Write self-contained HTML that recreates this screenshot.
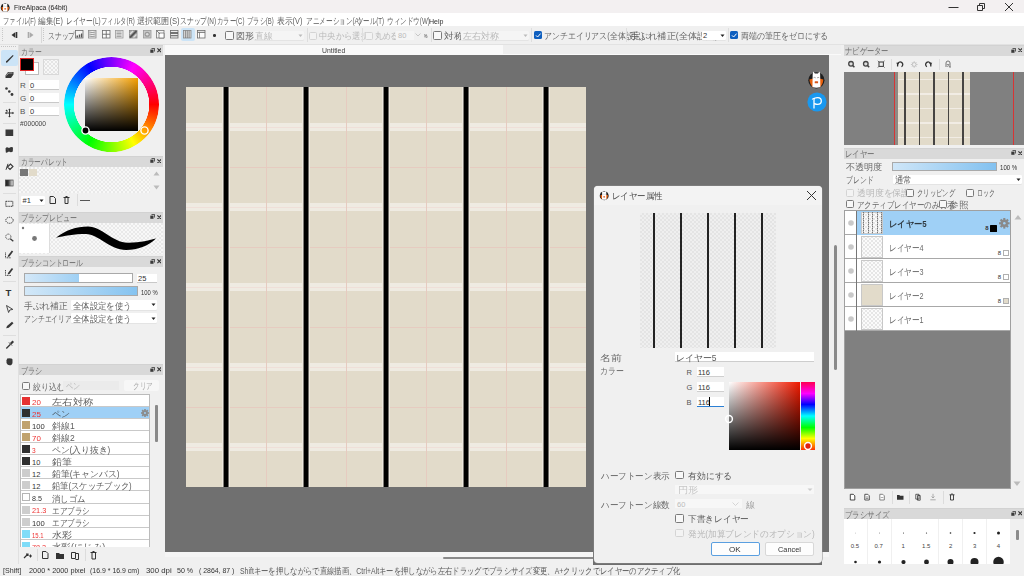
<!DOCTYPE html><html><head><meta charset="utf-8"><style>
html,body{margin:0;padding:0}
body{width:1024px;height:576px;overflow:hidden;position:relative;background:#f0f0f0;font-family:"Liberation Sans",sans-serif}
body div{position:absolute}
.t{white-space:pre}
</style></head><body>
<div style="left:0px;top:0px;width:1024px;height:13px;background:#f3f0f1"></div>
<div style="left:0px;top:13px;width:1024px;height:13px;background:#ffffff"></div>
<div style="left:0px;top:26px;width:1024px;height:18px;background:#f0f0f0"></div>
<div style="left:0px;top:44px;width:1024px;height:1px;background:#e2e2e2"></div>
<div style="left:0px;top:45px;width:1024px;height:531px;background:#f0f0f0"></div>
<div style="left:165px;top:45px;width:338px;height:10px;background:#f9f9f9"></div>
<div style="left:503px;top:45px;width:338px;height:9px;background:#eeeeee"></div>
<div style="left:503px;top:54px;width:338px;height:1px;background:#fafafa"></div>
<div class="t" style="left:322px;top:44.80px;line-height:12px;font-size:7.5px;color:#444;;transform:scaleX(0.913);transform-origin:0 50%">Untitled</div>
<div style="left:165px;top:55px;width:664px;height:497px;background:#707070"></div>
<div style="left:165px;top:552px;width:664px;height:5px;background:#f5f5f5"></div>
<div style="left:443px;top:557px;width:151px;height:2px;background:#8a8a8a;border-radius:1px"></div>
<div style="left:186px;top:87px;width:400px;height:400px;background:#e2dbca"></div>
<div style="left:186px;top:123px;width:400px;height:8px;background:#efebe2"></div>
<div style="left:186px;top:127px;width:400px;height:1px;background:#efdfd8"></div>
<div style="left:186px;top:203px;width:400px;height:8px;background:#efebe2"></div>
<div style="left:186px;top:207px;width:400px;height:1px;background:#efdfd8"></div>
<div style="left:186px;top:283px;width:400px;height:8px;background:#efebe2"></div>
<div style="left:186px;top:287px;width:400px;height:1px;background:#efdfd8"></div>
<div style="left:186px;top:363px;width:400px;height:8px;background:#efebe2"></div>
<div style="left:186px;top:367px;width:400px;height:1px;background:#efdfd8"></div>
<div style="left:186px;top:443px;width:400px;height:8px;background:#efebe2"></div>
<div style="left:186px;top:447px;width:400px;height:1px;background:#efdfd8"></div>
<div style="left:186px;top:167px;width:400px;height:1px;background:#e6cbc0"></div>
<div style="left:186px;top:247px;width:400px;height:1px;background:#e6cbc0"></div>
<div style="left:186px;top:327px;width:400px;height:1px;background:#e6cbc0"></div>
<div style="left:186px;top:407px;width:400px;height:1px;background:#e6cbc0"></div>
<div style="left:266px;top:87px;width:1px;height:400px;background:#e6cbc0"></div>
<div style="left:346px;top:87px;width:1px;height:400px;background:#e6cbc0"></div>
<div style="left:426px;top:87px;width:1px;height:400px;background:#e6cbc0"></div>
<div style="left:506px;top:87px;width:1px;height:400px;background:#e6cbc0"></div>
<div style="left:222px;top:87px;width:1px;height:400px;background:#eee8de"></div>
<div style="left:223px;top:87px;width:1px;height:400px;background:#807d77"></div>
<div style="left:224px;top:87px;width:4px;height:400px;background:#000"></div>
<div style="left:228px;top:87px;width:1px;height:400px;background:#6e6b66"></div>
<div style="left:229px;top:87px;width:1px;height:400px;background:#eee8de"></div>
<div style="left:302px;top:87px;width:1px;height:400px;background:#eee8de"></div>
<div style="left:303px;top:87px;width:1px;height:400px;background:#807d77"></div>
<div style="left:304px;top:87px;width:4px;height:400px;background:#000"></div>
<div style="left:308px;top:87px;width:1px;height:400px;background:#6e6b66"></div>
<div style="left:309px;top:87px;width:1px;height:400px;background:#eee8de"></div>
<div style="left:382px;top:87px;width:1px;height:400px;background:#eee8de"></div>
<div style="left:383px;top:87px;width:1px;height:400px;background:#807d77"></div>
<div style="left:384px;top:87px;width:4px;height:400px;background:#000"></div>
<div style="left:388px;top:87px;width:1px;height:400px;background:#6e6b66"></div>
<div style="left:389px;top:87px;width:1px;height:400px;background:#eee8de"></div>
<div style="left:462px;top:87px;width:1px;height:400px;background:#eee8de"></div>
<div style="left:463px;top:87px;width:1px;height:400px;background:#807d77"></div>
<div style="left:464px;top:87px;width:4px;height:400px;background:#000"></div>
<div style="left:468px;top:87px;width:1px;height:400px;background:#6e6b66"></div>
<div style="left:469px;top:87px;width:1px;height:400px;background:#eee8de"></div>
<div style="left:542px;top:87px;width:1px;height:400px;background:#eee8de"></div>
<div style="left:543px;top:87px;width:1px;height:400px;background:#807d77"></div>
<div style="left:544px;top:87px;width:4px;height:400px;background:#000"></div>
<div style="left:548px;top:87px;width:1px;height:400px;background:#6e6b66"></div>
<div style="left:549px;top:87px;width:1px;height:400px;background:#eee8de"></div>
<div style="left:834px;top:245px;width:3px;height:125px;background:#8a8a8a;border-radius:2px"></div>
<div style="left:18px;top:45px;width:1px;height:519px;background:#e0e0e0"></div>
<div style="left:1px;top:46px;width:16px;height:1px;background:repeating-linear-gradient(90deg,#c4c4c4 0 1px,transparent 1px 2px)"></div>
<div style="left:1px;top:49.8px;width:17px;height:16.7px;background:#cce4f7;border-radius:2px"></div>
<svg style="position:absolute;left:0;top:0" width="20" height="380" viewBox="0 0 20 380">
<path d="M6 62.5 Q5.5 61 7 60.5 L12.8 55 L13.6 55.8 L8.2 61.5 Q7.5 63 6 62.5Z" fill="#383838"/>
<path d="M5.5 75.5 L8 72 L13.5 72 L11 75.5Z M5.5 75.5 L11 75.5 L11 78 L5.5 78Z M11 75.5 L13.5 72 L13.5 74.5 L11 78Z" fill="#383838"/><path d="M6.5 75.5 L8.5 73 L12.5 73" fill="none" stroke="#f0f0f0" stroke-width="0.6"/>
<circle cx="6.5" cy="88.5" r="1.3" fill="#383838"/><circle cx="9.3" cy="91.5" r="1.3" fill="#383838"/><circle cx="12" cy="94.5" r="1.4" fill="#383838"/>
<path d="M9.5 109 V117 M5.5 113 H13.5" stroke="#383838" stroke-width="1"/><path d="M9.5 108.5 l-1.3 1.6 h2.6z M9.5 117.5 l-1.3 -1.6 h2.6z M5 113 l1.6 -1.3 v2.6z M14 113 l-1.6 -1.3 v2.6z" fill="#383838"/><path d="M6 110 l1.5 1.5" stroke="#383838" stroke-width="1.2"/>
<rect x="5.5" y="129.5" width="7.7" height="6.5" fill="#3a3a3a"/>
<path d="M5.5 148.5 Q6.5 146.5 9 148 Q11.5 146.5 13 147.5 L12.8 151.5 Q11 153 9 151.5 Q7 153 5.8 152.5Z" fill="#383838"/>
<path d="M7.5 167 L10.5 164 L13 166.5 L10 169.5Z" fill="none" stroke="#383838" stroke-width="1.1"/><path d="M6 169.8 L8 163.8" stroke="#383838" stroke-width="1"/>
<defs><linearGradient id="tg" x1="0" x2="1"><stop offset="0" stop-color="#222"/><stop offset="0.35" stop-color="#333"/><stop offset="1" stop-color="#eee"/></linearGradient></defs><rect x="5.5" y="180" width="7.6" height="6" fill="url(#tg)" stroke="#444" stroke-width="0.7"/>
<rect x="5.8" y="201.3" width="7" height="5" fill="none" stroke="#383838" stroke-width="1" stroke-dasharray="1.2 0.6"/>
<ellipse cx="9.5" cy="220.3" rx="3.7" ry="3" fill="none" stroke="#383838" stroke-width="1" stroke-dasharray="1.3 0.8"/>
<circle cx="8.3" cy="236.7" r="2.6" fill="none" stroke="#383838" stroke-width="0.9" stroke-dasharray="1 0.7"/><path d="M10.3 238.7 L13.3 241.3" stroke="#383838" stroke-width="1.3"/>
<path d="M5.5 252.5 v5.3 h5.5" fill="none" stroke="#383838" stroke-width="0.9" stroke-dasharray="1.1 0.6"/><path d="M8 255.5 L11.8 250.5 L13.2 251.6 L9.5 256.5 L7.6 257Z" fill="#383838"/>
<path d="M5.5 270 v5.5 h5.5" fill="none" stroke="#383838" stroke-width="0.9" stroke-dasharray="1.1 0.6"/><path d="M8 273 L11.8 268 L13.2 269.1 L9.5 274 L7.6 274.5Z" fill="#383838"/>
<path d="M6.5 305.5 L12.8 309.4 L9.8 310 L8.6 312.5 Z" fill="none" stroke="#383838" stroke-width="0.9"/>
<path d="M6.2 328.3 L7 326 L12 321.8 L13.5 323.3 L8.8 327.8Z" fill="#383838"/>
<path d="M6.3 348.5 L10.5 344.3" stroke="#383838" stroke-width="1.3"/><path d="M10 343 L12.5 340.6 L14 342.1 L11.6 344.6Z" fill="#383838"/><path d="M9 342.5 L12 345.5" stroke="#383838" stroke-width="1"/>
<path d="M6.5 361 Q6 359.5 7 359.5 V358.8 Q8 358 8.8 358.6 Q9.8 357.8 10.8 358.6 Q12 358.4 12.5 359.6 V362.5 Q12.3 365.5 9.5 365.3 Q7.5 365.3 6.5 363Z" fill="#383838"/>
</svg>
<div style="left:3px;top:102.3px;width:13px;height:1px;background:#dedede"></div>
<div style="left:3px;top:122.8px;width:13px;height:1px;background:#dedede"></div>
<div style="left:3px;top:193px;width:13px;height:1px;background:#dedede"></div>
<div style="left:3px;top:281px;width:13px;height:1px;background:#dedede"></div>
<div style="left:3px;top:334.8px;width:13px;height:1px;background:#dedede"></div>
<div class="t" style="left:5.6px;top:286.50px;line-height:12px;font-size:9.5px;color:#333;font-weight:bold;font-family:"Liberation Serif",serif">T</div>
<div style="left:19px;top:45px;width:144px;height:11px;background:#d9d9d9;border-top:1px solid #d2d2d2;box-sizing:border-box"></div>
<div class="t" style="left:20.5px;top:45.60px;line-height:12px;font-size:8.5px;color:#555;opacity:0.8;;transform:scaleX(0.762);transform-origin:0 50%">カラー</div>
<svg style="position:absolute;left:149.5px;top:47.8px;" width="5" height="5" viewBox="0 0 5 5"><path d="M0.3 1.6h3.2v3.2h-3.2z" fill="#3a3a3a"/><path d="M1.5 0.4h3.1v3.1" fill="none" stroke="#3a3a3a" stroke-width="0.9"/></svg>
<svg style="position:absolute;left:156.7px;top:48px;" width="4.5" height="4.5" viewBox="0 0 4.5 4.5"><path d="M0.4 0.4L4.1 4.1M4.1 0.4L0.4 4.1" stroke="#333" stroke-width="1.1"/></svg>
<div style="left:20px;top:58px;width:14px;height:13px;background:#fff;border:1px solid #bbb;box-sizing:border-box;left:25px;top:62px"></div>
<div style="left:20px;top:58px;width:14px;height:13px;background:#000;border:1px solid #e02020;box-sizing:border-box"></div>
<div style="left:43px;top:59px;width:16px;height:16px;background-color:#f7f7f7;background-image:linear-gradient(45deg,#e4e4e4 25%,transparent 25%,transparent 75%,#e4e4e4 75%),linear-gradient(45deg,#e4e4e4 25%,transparent 25%,transparent 75%,#e4e4e4 75%);background-size:4px 4px;background-position:0 0,2px 2px"></div>
<div style="left:43px;top:59px;width:16px;height:16px;border:1px solid #d8d8d8;box-sizing:border-box"></div>
<div class="t" style="left:20px;top:79.50px;line-height:12px;font-size:8px;color:#555;">R</div>
<div style="left:29px;top:80.0px;width:30px;height:9.5px;background:#fff;border-bottom:1px solid #c8c8c8;box-sizing:border-box"></div>
<div class="t" style="left:30px;top:79.75px;line-height:12px;font-size:7.5px;color:#333;">0</div>
<div class="t" style="left:20px;top:92.80px;line-height:12px;font-size:8px;color:#555;">G</div>
<div style="left:29px;top:93.3px;width:30px;height:9.5px;background:#fff;border-bottom:1px solid #c8c8c8;box-sizing:border-box"></div>
<div class="t" style="left:30px;top:93.05px;line-height:12px;font-size:7.5px;color:#333;">0</div>
<div class="t" style="left:20px;top:106.00px;line-height:12px;font-size:8px;color:#555;">B</div>
<div style="left:29px;top:106.5px;width:30px;height:9.5px;background:#fff;border-bottom:1px solid #c8c8c8;box-sizing:border-box"></div>
<div class="t" style="left:30px;top:106.25px;line-height:12px;font-size:7.5px;color:#333;">0</div>
<div class="t" style="left:20px;top:117.70px;line-height:12px;font-size:7.5px;color:#444;;transform:scaleX(0.893);transform-origin:0 50%">#000000</div>
<div style="left:64px;top:56.5px;width:95px;height:95px;border-radius:50%;background:conic-gradient(from 90deg,#f00,#ff0,#0f0,#0ff,#00f,#f0f,#f00);-webkit-mask:radial-gradient(circle,transparent 37.5px,#000 38px);mask:radial-gradient(circle,transparent 37.5px,#000 38px)"></div>
<div style="left:85px;top:77.5px;width:53px;height:53px;background:linear-gradient(to bottom,rgba(0,0,0,0),#000),linear-gradient(to right,#fff,#f5a000)"></div>
<svg style="position:absolute;left:80px;top:125px;" width="11" height="11" viewBox="0 0 11 11"><circle cx="5.5" cy="5.5" r="3.6" fill="#000" stroke="#fff" stroke-width="1.4"/></svg>
<svg style="position:absolute;left:139px;top:125px;" width="11" height="11" viewBox="0 0 11 11"><circle cx="5.5" cy="5.5" r="3.6" fill="none" stroke="#fff" stroke-width="1.4"/></svg>
<div style="left:19px;top:155.5px;width:144px;height:11px;background:#d9d9d9;border-top:1px solid #d2d2d2;box-sizing:border-box"></div>
<div class="t" style="left:20.5px;top:156.10px;line-height:12px;font-size:8.5px;color:#555;opacity:0.8;;transform:scaleX(0.745);transform-origin:0 50%">カラーパレット</div>
<svg style="position:absolute;left:149.5px;top:158.3px;" width="5" height="5" viewBox="0 0 5 5"><path d="M0.3 1.6h3.2v3.2h-3.2z" fill="#3a3a3a"/><path d="M1.5 0.4h3.1v3.1" fill="none" stroke="#3a3a3a" stroke-width="0.9"/></svg>
<svg style="position:absolute;left:156.7px;top:158.5px;" width="4.5" height="4.5" viewBox="0 0 4.5 4.5"><path d="M0.4 0.4L4.1 4.1M4.1 0.4L0.4 4.1" stroke="#333" stroke-width="1.1"/></svg>
<div style="left:19px;top:166.5px;width:131px;height:26px;background-color:#f8f8f8;background-image:linear-gradient(45deg,#e9e9e9 25%,transparent 25%,transparent 75%,#e9e9e9 75%),linear-gradient(45deg,#e9e9e9 25%,transparent 25%,transparent 75%,#e9e9e9 75%);background-size:4px 4px;background-position:0 0,2px 2px"></div>
<div style="left:20px;top:168.5px;width:8px;height:7.5px;background:#777"></div>
<div style="left:28.5px;top:168.5px;width:8px;height:7.5px;background:#e2dbca"></div>
<svg style="position:absolute;left:153px;top:170.8px;" width="7" height="5" viewBox="0 0 7 5"><path d="M0.5 4.5h6l-3-4z" fill="#bbb"/></svg>
<svg style="position:absolute;left:153px;top:184.5px;" width="7" height="5" viewBox="0 0 7 5"><path d="M0.5 0.5h6l-3 4z" fill="#bbb"/></svg>
<div style="left:21px;top:195.5px;width:24px;height:9px;background:#fff;border-radius:1px;box-shadow:0 0.5px 0 #d8d8d8"></div>
<div class="t" style="left:22.5px;top:195.00px;line-height:12px;font-size:7.5px;color:#333;">#1</div>
<svg style="position:absolute;left:39px;top:198.5px;" width="5" height="3" viewBox="0 0 5 3"><path d="M0.5 0.5h4l-2 2.5z" fill="#222"/></svg>
<svg style="position:absolute;left:48px;top:195px;" width="9" height="10" viewBox="0 0 9 10"><path d="M2 1.5h3.5l2 2v5h-5.5z" fill="none" stroke="#333" stroke-width="1"/></svg>
<svg style="position:absolute;left:62px;top:195px;" width="9" height="10" viewBox="0 0 9 10"><path d="M1.5 2.5h6M3 2.5v6h3v-6M3.5 1.5h2" fill="none" stroke="#333" stroke-width="1"/></svg>
<div style="left:77px;top:194px;width:1px;height:12px;background:#dcdcdc"></div>
<div style="left:80px;top:200px;width:10px;height:1px;background:#555"></div>
<div style="left:19px;top:211.5px;width:144px;height:11px;background:#d9d9d9;border-top:1px solid #d2d2d2;box-sizing:border-box"></div>
<div class="t" style="left:20.5px;top:212.10px;line-height:12px;font-size:8.5px;color:#555;opacity:0.8;;transform:scaleX(0.779);transform-origin:0 50%">ブラシプレビュー</div>
<svg style="position:absolute;left:149.5px;top:214.3px;" width="5" height="5" viewBox="0 0 5 5"><path d="M0.3 1.6h3.2v3.2h-3.2z" fill="#3a3a3a"/><path d="M1.5 0.4h3.1v3.1" fill="none" stroke="#3a3a3a" stroke-width="0.9"/></svg>
<svg style="position:absolute;left:156.7px;top:214.5px;" width="4.5" height="4.5" viewBox="0 0 4.5 4.5"><path d="M0.4 0.4L4.1 4.1M4.1 0.4L0.4 4.1" stroke="#333" stroke-width="1.1"/></svg>
<div style="left:19px;top:222.5px;width:144px;height:31px;background-color:#f8f8f8;background-image:linear-gradient(45deg,#e9e9e9 25%,transparent 25%,transparent 75%,#e9e9e9 75%),linear-gradient(45deg,#e9e9e9 25%,transparent 25%,transparent 75%,#e9e9e9 75%);background-size:4px 4px;background-position:0 0,2px 2px"></div>
<div style="left:19px;top:223.5px;width:30px;height:29.5px;background:#fff;border-right:1px solid #ddd"></div>
<svg style="position:absolute;left:19px;top:223px;" width="30" height="30" viewBox="0 0 30 30"><circle cx="4" cy="5" r="1.2" fill="#777"/><circle cx="15.5" cy="15.5" r="2.4" fill="#777"/></svg>
<svg style="position:absolute;left:0;top:0" width="170" height="260" viewBox="0 0 170 260"><path d="M56 237.8 C 66 230, 76 226.5, 88 226.5 C 102 226.5, 112 242.5, 128 242.7 C 140 242.8, 150 240, 156 238.5 C 148 246, 138 250, 126 250 C 110 250, 98 234, 86 234 C 74 234, 64 236, 56 237.8 Z" fill="#000"/></svg>
<div style="left:19px;top:256.3px;width:144px;height:11px;background:#d9d9d9;border-top:1px solid #d2d2d2;box-sizing:border-box"></div>
<div class="t" style="left:20.5px;top:256.90px;line-height:12px;font-size:8.5px;color:#555;opacity:0.8;;transform:scaleX(0.768);transform-origin:0 50%">ブラシコントロール</div>
<svg style="position:absolute;left:149.5px;top:259.1px;" width="5" height="5" viewBox="0 0 5 5"><path d="M0.3 1.6h3.2v3.2h-3.2z" fill="#3a3a3a"/><path d="M1.5 0.4h3.1v3.1" fill="none" stroke="#3a3a3a" stroke-width="0.9"/></svg>
<svg style="position:absolute;left:156.7px;top:259.3px;" width="4.5" height="4.5" viewBox="0 0 4.5 4.5"><path d="M0.4 0.4L4.1 4.1M4.1 0.4L0.4 4.1" stroke="#333" stroke-width="1.1"/></svg>
<div style="left:24px;top:273px;width:109px;height:10px;background:#fff;border:1px solid #a9a9a9;box-sizing:border-box"></div>
<div style="left:25px;top:274px;width:54px;height:8px;background:linear-gradient(90deg,#d4e8f8,#9fd0f4)"></div>
<div style="left:137px;top:273.5px;width:20px;height:9.5px;background:#fff;border-bottom:1px solid #c8c8c8;box-sizing:border-box"></div>
<div class="t" style="left:138px;top:273.25px;line-height:12px;font-size:7.5px;color:#333;">25</div>
<div style="left:24px;top:286.3px;width:114px;height:9.8px;background:linear-gradient(90deg,#d3e8f8,#85c3f0);border:1px solid #a9a9a9;box-sizing:border-box"></div>
<div class="t" style="left:141px;top:286.50px;line-height:12px;font-size:7.5px;color:#333;;transform:scaleX(0.781);transform-origin:0 50%">100 %</div>
<div class="t" style="left:24px;top:299.50px;line-height:12px;font-size:8.5px;color:#444;opacity:0.8;;transform:scaleX(0.966);transform-origin:0 50%">手ぶれ補正</div>
<div style="left:71px;top:300px;width:86px;height:9.5px;background:#fff;border-radius:1px;box-shadow:0 0.5px 0 #d8d8d8"></div>
<div class="t" style="left:72.5px;top:299.55px;line-height:12px;font-size:8.5px;color:#333;opacity:0.8;;transform:scaleX(0.929);transform-origin:0 50%">全体設定を使う</div>
<svg style="position:absolute;left:151px;top:303.25px;" width="5" height="3" viewBox="0 0 5 3"><path d="M0.5 0.5h4l-2 2.5z" fill="#222"/></svg>
<div class="t" style="left:24px;top:312.80px;line-height:12px;font-size:8.5px;color:#444;opacity:0.8;;transform:scaleX(0.763);transform-origin:0 50%">アンチエイリアス</div>
<div style="left:71px;top:313.3px;width:86px;height:9.5px;background:#fff;border-radius:1px;box-shadow:0 0.5px 0 #d8d8d8"></div>
<div class="t" style="left:72.5px;top:312.85px;line-height:12px;font-size:8.5px;color:#333;opacity:0.8;;transform:scaleX(0.929);transform-origin:0 50%">全体設定を使う</div>
<svg style="position:absolute;left:151px;top:316.55px;" width="5" height="3" viewBox="0 0 5 3"><path d="M0.5 0.5h4l-2 2.5z" fill="#222"/></svg>
<div style="left:19px;top:364.4px;width:144px;height:11px;background:#d9d9d9;border-top:1px solid #d2d2d2;box-sizing:border-box"></div>
<div class="t" style="left:20.5px;top:365.00px;line-height:12px;font-size:8.5px;color:#555;opacity:0.8;;transform:scaleX(0.790);transform-origin:0 50%">ブラシ</div>
<svg style="position:absolute;left:149.5px;top:367.2px;" width="5" height="5" viewBox="0 0 5 5"><path d="M0.3 1.6h3.2v3.2h-3.2z" fill="#3a3a3a"/><path d="M1.5 0.4h3.1v3.1" fill="none" stroke="#3a3a3a" stroke-width="0.9"/></svg>
<svg style="position:absolute;left:156.7px;top:367.4px;" width="4.5" height="4.5" viewBox="0 0 4.5 4.5"><path d="M0.4 0.4L4.1 4.1M4.1 0.4L0.4 4.1" stroke="#333" stroke-width="1.1"/></svg>
<div style="left:21.5px;top:381.5px;width:8.5px;height:8.5px;border:0.8px solid #7a7a7a;background:#f8f8f8;border-radius:1.5px;box-sizing:border-box"></div>
<div class="t" style="left:32.5px;top:380.50px;line-height:12px;font-size:8.5px;color:#444;opacity:0.8;;transform:scaleX(0.879);transform-origin:0 50%">絞り込む</div>
<div style="left:63px;top:381px;width:55.5px;height:9px;background:#ebebeb"></div>
<div class="t" style="left:66px;top:380.30px;line-height:12px;font-size:8.5px;color:#aaa;opacity:0.8;;transform:scaleX(0.786);transform-origin:0 50%">ペン</div>
<div style="left:123.7px;top:379.8px;width:35px;height:11.2px;background:#f7f7f7;border-radius:2px"></div>
<div class="t" style="left:133px;top:380.30px;line-height:12px;font-size:8.5px;color:#999;opacity:0.8;;transform:scaleX(0.733);transform-origin:0 50%">クリア</div>
<div style="left:19.7px;top:394.4px;width:130px;height:153px;background:#fff;border-left:1px solid #bbb;border-right:1px solid #bbb;border-top:1px solid #bbb;box-sizing:border-box;overflow:hidden"></div>
<div style="left:20.5px;top:405.70000000000005px;width:128.5px;height:1px;background:#c9c9c9"></div>
<div style="left:21.9px;top:396.6px;width:8px;height:8px;background:#e63232"></div>
<div class="t" style="left:32px;top:396.50px;line-height:12px;font-size:7.5px;color:#e33;;transform:scaleX(1.062);transform-origin:0 50%">20</div>
<div class="t" style="left:51.9px;top:395.70px;line-height:12px;font-size:8.5px;color:#333;opacity:0.8;;transform:scaleX(1.150);transform-origin:0 50%">左右対称</div>
<div style="left:20.5px;top:406.70000000000005px;width:128.5px;height:12.1px;background:#9fd0f6"></div>
<div style="left:20.5px;top:417.80000000000007px;width:128.5px;height:1px;background:#c9c9c9"></div>
<div style="left:21.9px;top:408.70000000000005px;width:8px;height:8px;background:#2f2f2f"></div>
<div class="t" style="left:32px;top:408.60px;line-height:12px;font-size:7.5px;color:#e33;;transform:scaleX(1.062);transform-origin:0 50%">25</div>
<div class="t" style="left:51.9px;top:407.80px;line-height:12px;font-size:8.5px;color:#333;opacity:0.8;;transform:scaleX(1.000);transform-origin:0 50%">ペン</div>
<div style="left:20.5px;top:429.90000000000003px;width:128.5px;height:1px;background:#c9c9c9"></div>
<div style="left:21.9px;top:420.8px;width:8px;height:8px;background:#c0a26e"></div>
<div class="t" style="left:32px;top:420.70px;line-height:12px;font-size:7.5px;color:#333;;transform:scaleX(1.017);transform-origin:0 50%">100</div>
<div class="t" style="left:51.9px;top:419.90px;line-height:12px;font-size:8.5px;color:#333;opacity:0.8;;transform:scaleX(1.000);transform-origin:0 50%">斜線1</div>
<div style="left:20.5px;top:442.00000000000006px;width:128.5px;height:1px;background:#c9c9c9"></div>
<div style="left:21.9px;top:432.90000000000003px;width:8px;height:8px;background:#c0a26e"></div>
<div class="t" style="left:32px;top:432.80px;line-height:12px;font-size:7.5px;color:#e33;;transform:scaleX(1.062);transform-origin:0 50%">70</div>
<div class="t" style="left:51.9px;top:432.00px;line-height:12px;font-size:8.5px;color:#333;opacity:0.8;;transform:scaleX(1.000);transform-origin:0 50%">斜線2</div>
<div style="left:20.5px;top:454.1px;width:128.5px;height:1px;background:#c9c9c9"></div>
<div style="left:21.9px;top:445.0px;width:8px;height:8px;background:#2f2f2f"></div>
<div class="t" style="left:32px;top:444.90px;line-height:12px;font-size:7.5px;color:#e33;;transform:scaleX(0.875);transform-origin:0 50%">3</div>
<div class="t" style="left:51.9px;top:444.10px;line-height:12px;font-size:8.5px;color:#333;opacity:0.8;;transform:scaleX(0.975);transform-origin:0 50%">ペン(入り抜き)</div>
<div style="left:20.5px;top:466.20000000000005px;width:128.5px;height:1px;background:#c9c9c9"></div>
<div style="left:21.9px;top:457.1px;width:8px;height:8px;background:#2f2f2f"></div>
<div class="t" style="left:32px;top:457.00px;line-height:12px;font-size:7.5px;color:#333;;transform:scaleX(1.000);transform-origin:0 50%">10</div>
<div class="t" style="left:51.9px;top:456.20px;line-height:12px;font-size:8.5px;color:#333;opacity:0.8;;transform:scaleX(1.107);transform-origin:0 50%">鉛筆</div>
<div style="left:20.5px;top:478.30000000000007px;width:128.5px;height:1px;background:#c9c9c9"></div>
<div style="left:21.9px;top:469.20000000000005px;width:8px;height:8px;background:#cdcdcd"></div>
<div class="t" style="left:32px;top:469.10px;line-height:12px;font-size:7.5px;color:#333;;transform:scaleX(1.000);transform-origin:0 50%">12</div>
<div class="t" style="left:51.9px;top:468.30px;line-height:12px;font-size:8.5px;color:#333;opacity:0.8;;transform:scaleX(0.982);transform-origin:0 50%">鉛筆(キャンバス)</div>
<div style="left:20.5px;top:490.40000000000003px;width:128.5px;height:1px;background:#c9c9c9"></div>
<div style="left:21.9px;top:481.3px;width:8px;height:8px;background:#cdcdcd"></div>
<div class="t" style="left:32px;top:481.20px;line-height:12px;font-size:7.5px;color:#333;;transform:scaleX(1.000);transform-origin:0 50%">12</div>
<div class="t" style="left:51.9px;top:480.40px;line-height:12px;font-size:8.5px;color:#333;opacity:0.8;;transform:scaleX(0.920);transform-origin:0 50%">鉛筆(スケッチブック)</div>
<div style="left:20.5px;top:502.50000000000006px;width:128.5px;height:1px;background:#c9c9c9"></div>
<div style="left:21.9px;top:493.40000000000003px;width:8px;height:8px;background:#ffffff;border:1px solid #b5b5b5;box-sizing:border-box"></div>
<div class="t" style="left:32px;top:493.30px;line-height:12px;font-size:7.5px;color:#333;;transform:scaleX(0.950);transform-origin:0 50%">8.5</div>
<div class="t" style="left:51.9px;top:492.50px;line-height:12px;font-size:8.5px;color:#333;opacity:0.8;;transform:scaleX(0.929);transform-origin:0 50%">消しゴム</div>
<div style="left:20.5px;top:514.6px;width:128.5px;height:1px;background:#c9c9c9"></div>
<div style="left:21.9px;top:505.5px;width:8px;height:8px;background:#cdcdcd"></div>
<div class="t" style="left:32px;top:505.40px;line-height:12px;font-size:7.5px;color:#e33;;transform:scaleX(0.979);transform-origin:0 50%">21.3</div>
<div class="t" style="left:51.9px;top:504.60px;line-height:12px;font-size:8.5px;color:#333;opacity:0.8;;transform:scaleX(0.843);transform-origin:0 50%">エアブラシ</div>
<div style="left:20.5px;top:526.7px;width:128.5px;height:1px;background:#c9c9c9"></div>
<div style="left:21.9px;top:517.6px;width:8px;height:8px;background:#cdcdcd"></div>
<div class="t" style="left:32px;top:517.50px;line-height:12px;font-size:7.5px;color:#333;;transform:scaleX(1.017);transform-origin:0 50%">100</div>
<div class="t" style="left:51.9px;top:516.70px;line-height:12px;font-size:8.5px;color:#333;opacity:0.8;;transform:scaleX(0.843);transform-origin:0 50%">エアブラシ</div>
<div style="left:20.5px;top:538.8000000000001px;width:128.5px;height:1px;background:#c9c9c9"></div>
<div style="left:21.9px;top:529.7px;width:8px;height:8px;background:#7fdcf8"></div>
<div class="t" style="left:32px;top:529.60px;line-height:12px;font-size:7.5px;color:#e33;;transform:scaleX(0.786);transform-origin:0 50%">15.1</div>
<div class="t" style="left:51.9px;top:528.80px;line-height:12px;font-size:8.5px;color:#333;opacity:0.8;;transform:scaleX(1.107);transform-origin:0 50%">水彩</div>
<div style="left:20.5px;top:550.9px;width:128.5px;height:1px;background:#c9c9c9"></div>
<div style="left:21.9px;top:541.8px;width:8px;height:8px;background:#7fdcf8"></div>
<div class="t" style="left:32px;top:541.70px;line-height:12px;font-size:7.5px;color:#e33;;transform:scaleX(0.964);transform-origin:0 50%">78.2</div>
<div class="t" style="left:51.9px;top:540.90px;line-height:12px;font-size:8.5px;color:#333;opacity:0.8;;transform:scaleX(1.049);transform-origin:0 50%">水彩(にじみ)</div>
<svg style="position:absolute;left:139.6px;top:407.5px" width="10" height="10" viewBox="-5 -5 10 10"><g fill="#8c8c8c"><rect x="-0.80" y="-4.00" width="1.60" height="2.00" transform="rotate(0)"/><rect x="-0.80" y="-4.00" width="1.60" height="2.00" transform="rotate(45)"/><rect x="-0.80" y="-4.00" width="1.60" height="2.00" transform="rotate(90)"/><rect x="-0.80" y="-4.00" width="1.60" height="2.00" transform="rotate(135)"/><rect x="-0.80" y="-4.00" width="1.60" height="2.00" transform="rotate(180)"/><rect x="-0.80" y="-4.00" width="1.60" height="2.00" transform="rotate(225)"/><rect x="-0.80" y="-4.00" width="1.60" height="2.00" transform="rotate(270)"/><rect x="-0.80" y="-4.00" width="1.60" height="2.00" transform="rotate(315)"/><circle r="2.80"/></g><circle r="0.96" fill="#9fd0f6"/></svg>
<div style="left:155px;top:404.7px;width:2.5px;height:37.5px;background:#8a8a8a;border-radius:1px"></div>
<div style="left:19px;top:547px;width:144px;height:16px;background:#f0f0f0"></div>
<svg style="position:absolute;left:22px;top:550px;" width="10" height="10" viewBox="0 0 10 10"><path d="M2 8 L6 4 M4 4 L6 4 L6 6" fill="none" stroke="#333" stroke-width="1.2"/><path d="M7 6h3M8.5 4.5v3" stroke="#333" stroke-width="1"/></svg>
<div style="left:37px;top:549px;width:1px;height:12px;background:#dcdcdc"></div>
<svg style="position:absolute;left:41px;top:550px;" width="9" height="10" viewBox="0 0 9 10"><path d="M1.5 1.5h3.5l2 2v5h-5.5z" fill="none" stroke="#333" stroke-width="1"/></svg>
<svg style="position:absolute;left:55px;top:550px;" width="10" height="10" viewBox="0 0 10 10"><path d="M1 3h3l1 1h4v5h-8z" fill="#333"/></svg>
<svg style="position:absolute;left:70px;top:550px;" width="10" height="10" viewBox="0 0 10 10"><path d="M1.5 2.5h4v6h-4zM5.5 3.5h3v6h-3" fill="none" stroke="#333" stroke-width="1"/></svg>
<div style="left:85px;top:549px;width:1px;height:12px;background:#dcdcdc"></div>
<svg style="position:absolute;left:89px;top:550px;" width="10" height="10" viewBox="0 0 10 10"><path d="M1.5 2.5h6M3 2.5v6.5h3.5v-6.5M3.5 1.5h2" fill="none" stroke="#333" stroke-width="1"/></svg>
<div class="t" style="left:3px;top:565.00px;line-height:12px;font-size:7.5px;color:#333;;transform:scaleX(0.947);transform-origin:0 50%">[Shift]</div>
<div class="t" style="left:28.5px;top:565.00px;line-height:12px;font-size:7.5px;color:#333;;transform:scaleX(0.974);transform-origin:0 50%">2000 * 2000 pixel</div>
<div class="t" style="left:90px;top:565.00px;line-height:12px;font-size:7.5px;color:#333;;transform:scaleX(0.926);transform-origin:0 50%">(16.9 * 16.9 cm)</div>
<div class="t" style="left:146px;top:565.00px;line-height:12px;font-size:7.5px;color:#333;;transform:scaleX(1.042);transform-origin:0 50%">300 dpi</div>
<div class="t" style="left:177px;top:565.00px;line-height:12px;font-size:7.5px;color:#333;;transform:scaleX(0.941);transform-origin:0 50%">50 %</div>
<div class="t" style="left:199px;top:565.00px;line-height:12px;font-size:7.5px;color:#333;;transform:scaleX(0.921);transform-origin:0 50%">( 2864, 87 )</div>
<div class="t" style="left:240px;top:564.80px;line-height:12px;font-size:8.5px;color:#333;opacity:0.8;;transform:scaleX(0.813);transform-origin:0 50%">Shiftキーを押しながらで直線描画、Ctrl+Altキーを押しながら左右ドラッグでブラシサイズ変更、A+クリックでレイヤーのアクティブ化</div>
<svg style="position:absolute;left:0.2999999999999998px;top:1.5999999999999996px" width="10.4" height="10.4" viewBox="0 0 20 20"><circle cx="10" cy="11" r="8.6" fill="#1e1e1e"/><path d="M2.6 10 Q3 16 7 19 L6.5 9Z" fill="#e8600c"/><path d="M17.4 10 Q17 16 13 19 L13.5 9Z" fill="#e8600c"/><path d="M6 5 L6.5 1.6 L8.4 3.6 L11.6 3.6 L13.5 1.6 L14 5 L14.2 18.2 Q10 19.4 5.8 18.2Z" fill="#fff"/><path d="M7 8.2 Q8.3 7.4 9.3 8.4 M10.7 8.4 Q11.7 7.4 13 8.2" fill="none" stroke="#666" stroke-width="0.6"/><rect x="8.2" y="12" width="3.6" height="2.2" rx="0.6" fill="#d8561a"/></svg>
<div class="t" style="left:13.7px;top:2.00px;line-height:12px;font-size:7.5px;color:#222;;transform:scaleX(0.902);transform-origin:0 50%">FireAlpaca (64bit)</div>
<svg style="position:absolute;left:948px;top:3px;" width="11" height="9" viewBox="0 0 11 9"><path d="M0.5 4.5h10" stroke="#333" stroke-width="1"/></svg>
<svg style="position:absolute;left:976px;top:2px;" width="10" height="10" viewBox="0 0 10 10"><path d="M1.5 3.5h5v5h-5z" fill="none" stroke="#333" stroke-width="1"/><path d="M3.5 3.5v-2h5v5h-2" fill="none" stroke="#333" stroke-width="1"/></svg>
<svg style="position:absolute;left:1004px;top:2px;" width="10" height="10" viewBox="0 0 10 10"><path d="M1 1L9 9M9 1L1 9" stroke="#333" stroke-width="1"/></svg>
<div class="t" style="left:3px;top:15.30px;line-height:12px;font-size:8.5px;color:#333;opacity:0.8;;transform:scaleX(0.700);transform-origin:0 50%">ファイル(F)</div>
<div class="t" style="left:38px;top:15.30px;line-height:12px;font-size:8.5px;color:#333;opacity:0.8;;transform:scaleX(0.846);transform-origin:0 50%">編集(E)</div>
<div class="t" style="left:66px;top:15.30px;line-height:12px;font-size:8.5px;color:#333;opacity:0.8;;transform:scaleX(0.744);transform-origin:0 50%">レイヤー(L)</div>
<div class="t" style="left:101px;top:15.30px;line-height:12px;font-size:8.5px;color:#333;opacity:0.8;;transform:scaleX(0.707);transform-origin:0 50%">フィルタ(R)</div>
<div class="t" style="left:137px;top:15.30px;line-height:12px;font-size:8.5px;color:#333;opacity:0.8;;transform:scaleX(0.900);transform-origin:0 50%">選択範囲(S)</div>
<div class="t" style="left:180px;top:15.30px;line-height:12px;font-size:8.5px;color:#333;opacity:0.8;;transform:scaleX(0.756);transform-origin:0 50%">スナップ(N)</div>
<div class="t" style="left:217px;top:15.30px;line-height:12px;font-size:8.5px;color:#333;opacity:0.8;;transform:scaleX(0.706);transform-origin:0 50%">カラー(C)</div>
<div class="t" style="left:247px;top:15.30px;line-height:12px;font-size:8.5px;color:#333;opacity:0.8;;transform:scaleX(0.697);transform-origin:0 50%">ブラシ(B)</div>
<div class="t" style="left:276.5px;top:15.30px;line-height:12px;font-size:8.5px;color:#333;opacity:0.8;;transform:scaleX(0.865);transform-origin:0 50%">表示(V)</div>
<div class="t" style="left:305.5px;top:15.30px;line-height:12px;font-size:8.5px;color:#333;opacity:0.8;;transform:scaleX(0.738);transform-origin:0 50%">アニメーション(A)</div>
<div class="t" style="left:357px;top:15.30px;line-height:12px;font-size:8.5px;color:#333;opacity:0.8;;transform:scaleX(0.712);transform-origin:0 50%">ツール(T)</div>
<div class="t" style="left:386.5px;top:15.30px;line-height:12px;font-size:8.5px;color:#333;opacity:0.8;;transform:scaleX(0.730);transform-origin:0 50%">ウィンドウ(W)</div>
<div class="t" style="left:429px;top:15.50px;line-height:12px;font-size:7.5px;color:#333;;transform:scaleX(0.938);transform-origin:0 50%">Help</div>
<div style="left:2px;top:28px;width:1px;height:14px;background:repeating-linear-gradient(180deg,#c8c8c8 0 1px,transparent 1px 2px)"></div>
<svg style="position:absolute;left:10px;top:31px;" width="8" height="8" viewBox="0 0 8 8"><path d="M5.5 1L1.5 4l4 3z" fill="#333"/><rect x="6" y="1" width="1.3" height="6" fill="#333"/></svg>
<svg style="position:absolute;left:27px;top:31px;" width="8" height="8" viewBox="0 0 8 8"><rect x="0.7" y="1" width="1.3" height="6" fill="#aaa"/><path d="M2.5 1l4 3-4 3z" fill="#aaa"/></svg>
<div style="left:41px;top:27px;width:1px;height:16px;background:#d8d8d8"></div>
<div style="left:43px;top:28px;width:1px;height:14px;background:repeating-linear-gradient(180deg,#c8c8c8 0 1px,transparent 1px 2px)"></div>
<div class="t" style="left:48px;top:30.10px;line-height:12px;font-size:8.5px;color:#444;opacity:0.8;;transform:scaleX(0.750);transform-origin:0 50%">スナップ</div>
<div style="left:180.8px;top:27.8px;width:13.8px;height:13.5px;background:#cce4f7;border-radius:2px"></div>
<svg style="position:absolute;left:74.75px;top:30.3px;" width="9" height="9" viewBox="0 0 9 9"><rect x="0.5" y="0.5" width="7.5" height="7.5" fill="#f4f4f4" stroke="#6a6a6a" stroke-width="0.8"/><path d="M1.5 7.5v-2h1.5v2M3.8 7.5v-3h1.5v3M6 7.5v-4h1.3v4" fill="#555"/></svg>
<svg style="position:absolute;left:88.25px;top:30.3px;" width="9" height="9" viewBox="0 0 9 9"><rect x="0.5" y="0.5" width="7.5" height="7.5" fill="#f2f2f2" stroke="#888" stroke-width="0.8"/><path d="M1 2 q3.2 1 6.5 0M1 4 q3.2 1 6.5 0M1 6 q3.2 1 6.5 0" fill="none" stroke="#6a6a6a" stroke-width="0.7"/></svg>
<svg style="position:absolute;left:101.5px;top:30.3px;" width="9" height="9" viewBox="0 0 9 9"><rect x="0.5" y="0.5" width="7.5" height="7.5" fill="#fafafa" stroke="#6a6a6a" stroke-width="0.8"/><path d="M4.25 0.5v7.5M0.5 4.25h7.5" stroke="#6a6a6a" stroke-width="0.9"/></svg>
<svg style="position:absolute;left:115.25px;top:30.3px;" width="9" height="9" viewBox="0 0 9 9"><rect x="0.5" y="0.5" width="7.5" height="7.5" fill="#ececec" stroke="#999" stroke-width="0.8"/><path d="M1.5 2h5M1.5 3.5h5M1.5 5h5M1.5 6.5h5" stroke="#777" stroke-width="0.6"/></svg>
<svg style="position:absolute;left:128.75px;top:30.3px;" width="9" height="9" viewBox="0 0 9 9"><rect x="0.5" y="0.5" width="7.5" height="7.5" fill="#aaa" stroke="#888" stroke-width="0.8"/><path d="M1 7.5L7.5 1" stroke="#555" stroke-width="2"/><path d="M1 4L4 1M4.5 7.5L7.5 4.5" stroke="#ddd" stroke-width="1.2"/></svg>
<svg style="position:absolute;left:142.5px;top:30.3px;" width="9" height="9" viewBox="0 0 9 9"><rect x="0.5" y="0.5" width="7.5" height="7.5" fill="#c8c8c8" stroke="#999" stroke-width="0.8"/><circle cx="4.25" cy="4.25" r="2.6" fill="#999"/><circle cx="4.25" cy="4.25" r="1.3" fill="#ddd"/></svg>
<svg style="position:absolute;left:156.0px;top:30.3px;" width="9" height="9" viewBox="0 0 9 9"><rect x="0.5" y="0.5" width="7.5" height="7.5" fill="#f6f6f6" stroke="#777" stroke-width="0.8"/><path d="M3 3h5v5h-5z" fill="#fff" stroke="#666" stroke-width="0.7"/><path d="M1 1l3 3" stroke="#666" stroke-width="0.8"/></svg>
<svg style="position:absolute;left:169.5px;top:30.3px;" width="9" height="9" viewBox="0 0 9 9"><rect x="0.5" y="0.5" width="7.5" height="7.5" fill="#eee" stroke="#6a6a6a" stroke-width="0.8"/><rect x="0.5" y="2.2" width="7.5" height="1.6" fill="#555"/><rect x="0.5" y="5" width="7.5" height="1.3" fill="#777"/></svg>
<svg style="position:absolute;left:183.25px;top:30.3px;" width="9" height="9" viewBox="0 0 9 9"><rect x="0.5" y="0.5" width="7.5" height="7.5" fill="#ddd" stroke="#888" stroke-width="0.8"/><path d="M2.4 0.5v7.5M4.25 0.5v7.5M6.1 0.5v7.5" stroke="#777" stroke-width="0.8"/></svg>
<svg style="position:absolute;left:196.5px;top:30.3px;" width="9" height="9" viewBox="0 0 9 9"><rect x="0.5" y="0.5" width="7.5" height="7.5" fill="#fbfbfb" stroke="#6a6a6a" stroke-width="0.8"/><path d="M0.5 2.3h7.5" stroke="#6a6a6a" stroke-width="1"/><path d="M2.5 2.3v5.7" stroke="#6a6a6a" stroke-width="0.7"/></svg>
<div style="left:213.3px;top:34px;width:2.6px;height:2.6px;background:#333;border-radius:50%"></div>
<div style="left:225px;top:31px;width:9px;height:9px;border:0.8px solid #7a7a7a;background:#f8f8f8;border-radius:1.5px;box-sizing:border-box"></div>
<div class="t" style="left:236px;top:30.10px;line-height:12px;font-size:8.5px;color:#444;opacity:0.8;;transform:scaleX(1.000);transform-origin:0 50%">図形</div>
<div style="left:253.6px;top:30.7px;width:50px;height:9.3px;background:#f5f5f5;border-radius:1px;box-shadow:0 0.5px 0 #d8d8d8"></div>
<div class="t" style="left:255.1px;top:30.15px;line-height:12px;font-size:8.5px;color:#aaa;opacity:0.8;;transform:scaleX(0.964);transform-origin:0 50%">直線</div>
<svg style="position:absolute;left:297.6px;top:33.85px;" width="5" height="3" viewBox="0 0 5 3"><path d="M0.5 0.5h4l-2 2.5z" fill="#bbb"/></svg>
<div style="left:306.5px;top:28px;width:1px;height:14px;background:#dedede"></div>
<div style="left:308.5px;top:31.5px;width:8px;height:8px;border:0.8px solid #d4d4d4;background:#f3f3f3;border-radius:1.5px;box-sizing:border-box"></div>
<div class="t" style="left:319px;top:30.10px;line-height:12px;font-size:8.5px;color:#aaa;opacity:0.8;;transform:scaleX(0.929);transform-origin:0 50%">中央から選択</div>
<div style="left:362.3px;top:28px;width:1px;height:14px;background:#dedede"></div>
<div style="left:365px;top:31.5px;width:8px;height:8px;border:0.8px solid #d4d4d4;background:#f3f3f3;border-radius:1.5px;box-sizing:border-box"></div>
<div class="t" style="left:375px;top:30.10px;line-height:12px;font-size:8.5px;color:#aaa;opacity:0.8;;transform:scaleX(0.857);transform-origin:0 50%">丸める</div>
<div style="left:396.4px;top:30.5px;width:17.5px;height:9.5px;background:#f5f5f5"></div>
<div class="t" style="left:398px;top:30.30px;line-height:12px;font-size:7.5px;color:#bbb;">80</div>
<svg style="position:absolute;left:414.5px;top:33px;" width="6" height="4" viewBox="0 0 6 4"><path d="M0.5 0.5l2.5 2.5 2.5-2.5" fill="none" stroke="#bbb" stroke-width="0.8"/></svg>
<div class="t" style="left:423.5px;top:30.30px;line-height:12px;font-size:5.5px;color:#444;;transform:scaleX(0.700);transform-origin:0 50%">%</div>
<div style="left:431px;top:28px;width:1px;height:14px;background:#dedede"></div>
<div style="left:433px;top:31px;width:8.5px;height:8.5px;border:0.8px solid #7a7a7a;background:#f8f8f8;border-radius:1.5px;box-sizing:border-box"></div>
<div class="t" style="left:444px;top:30.10px;line-height:12px;font-size:8.5px;color:#444;opacity:0.8;;transform:scaleX(1.071);transform-origin:0 50%">対称</div>
<div style="left:461.2px;top:30.7px;width:68px;height:9.3px;background:#f5f5f5;border-radius:1px;box-shadow:0 0.5px 0 #d8d8d8"></div>
<div class="t" style="left:462.7px;top:30.15px;line-height:12px;font-size:8.5px;color:#aaa;opacity:0.8;;transform:scaleX(1.007);transform-origin:0 50%">左右対称</div>
<svg style="position:absolute;left:523.2px;top:33.85px;" width="5" height="3" viewBox="0 0 5 3"><path d="M0.5 0.5h4l-2 2.5z" fill="#bbb"/></svg>
<div style="left:531px;top:28px;width:1px;height:14px;background:#dedede"></div>
<div style="left:534px;top:31px;width:8px;height:8px;background:#0f5fbf;border-radius:1.5px"></div>
<svg style="position:absolute;left:534px;top:31px;" width="8" height="8" viewBox="0 0 8 8"><path d="M2 4.4 L3.6 6 L6.6 2.6" fill="none" stroke="#fff" stroke-width="1"/></svg>
<div class="t" style="left:544px;top:30.10px;line-height:12px;font-size:8.5px;color:#444;opacity:0.8;;transform:scaleX(0.878);transform-origin:0 50%">アンチエイリアス(全体設定)</div>
<div style="left:626px;top:28px;width:1px;height:14px;background:#dedede"></div>
<div class="t" style="left:630px;top:30.10px;line-height:12px;font-size:8.5px;color:#444;opacity:0.8;;transform:scaleX(1.014);transform-origin:0 50%">手ぶれ補正(全体設定)</div>
<div style="left:701.5px;top:30.5px;width:24px;height:9.5px;background:#fff;border-radius:1px;box-shadow:0 0.5px 0 #d8d8d8"></div>
<div class="t" style="left:703.0px;top:30.25px;line-height:12px;font-size:7.5px;color:#333;">2</div>
<svg style="position:absolute;left:719.5px;top:33.75px;" width="5" height="3" viewBox="0 0 5 3"><path d="M0.5 0.5h4l-2 2.5z" fill="#222"/></svg>
<div style="left:728px;top:28px;width:1px;height:14px;background:#dedede"></div>
<div style="left:730px;top:31px;width:8px;height:8px;background:#0f5fbf;border-radius:1.5px"></div>
<svg style="position:absolute;left:730px;top:31px;" width="8" height="8" viewBox="0 0 8 8"><path d="M2 4.4 L3.6 6 L6.6 2.6" fill="none" stroke="#fff" stroke-width="1"/></svg>
<div class="t" style="left:741px;top:30.10px;line-height:12px;font-size:8.5px;color:#444;opacity:0.8;;transform:scaleX(0.883);transform-origin:0 50%">両端の筆圧をゼロにする</div>
<svg style="position:absolute;left:807.1px;top:70.39999999999999px" width="18.8" height="18.8" viewBox="0 0 20 20"><circle cx="10" cy="11" r="8.6" fill="#1e1e1e"/><path d="M2.6 10 Q3 16 7 19 L6.5 9Z" fill="#e8600c"/><path d="M17.4 10 Q17 16 13 19 L13.5 9Z" fill="#e8600c"/><path d="M6 5 L6.5 1.6 L8.4 3.6 L11.6 3.6 L13.5 1.6 L14 5 L14.2 18.2 Q10 19.4 5.8 18.2Z" fill="#fff"/><path d="M7 8.2 Q8.3 7.4 9.3 8.4 M10.7 8.4 Q11.7 7.4 13 8.2" fill="none" stroke="#666" stroke-width="0.6"/><rect x="8.2" y="12" width="3.6" height="2.2" rx="0.6" fill="#d8561a"/></svg>
<svg style="position:absolute;left:806.5px;top:91.7px;" width="20" height="20" viewBox="0 0 20 20"><circle cx="10" cy="10" r="9.6" fill="#1998ef"/><path d="M7 16.5 V7.5 Q7 5.6 10.8 5.6 Q14.3 5.6 14.3 9 Q14.3 12.4 10.6 12.4 Q9 12.4 7.6 11.6" fill="none" stroke="#fff" stroke-width="1.3"/><path d="M5.2 7.6 Q6 6 7.6 6.2" fill="none" stroke="#fff" stroke-width="1.1"/></svg>
<div style="left:843.5px;top:44.8px;width:180.5px;height:11px;background:#d9d9d9;border-top:1px solid #d2d2d2;box-sizing:border-box"></div>
<div class="t" style="left:845.0px;top:45.40px;line-height:12px;font-size:8.5px;color:#555;opacity:0.8;;transform:scaleX(0.810);transform-origin:0 50%">ナビゲーター</div>
<svg style="position:absolute;left:1010.5px;top:47.599999999999994px;" width="5" height="5" viewBox="0 0 5 5"><path d="M0.3 1.6h3.2v3.2h-3.2z" fill="#3a3a3a"/><path d="M1.5 0.4h3.1v3.1" fill="none" stroke="#3a3a3a" stroke-width="0.9"/></svg>
<svg style="position:absolute;left:1017.7px;top:47.8px;" width="4.5" height="4.5" viewBox="0 0 4.5 4.5"><path d="M0.4 0.4L4.1 4.1M4.1 0.4L0.4 4.1" stroke="#333" stroke-width="1.1"/></svg>
<svg style="position:absolute;left:0;top:0" width="1024" height="80" viewBox="0 0 1024 80">
<circle cx="851" cy="63.8" r="2.3" fill="#ddd" stroke="#444" stroke-width="1.3"/><path d="M852.8 65.6 L854.4 67.2" stroke="#444" stroke-width="1.5"/>
<circle cx="865.8" cy="63.8" r="2.3" fill="#ddd" stroke="#444" stroke-width="1.3"/><path d="M867.6 65.6 L869.2 67.2" stroke="#444" stroke-width="1.5"/>
<rect x="879" y="62" width="4.4" height="4.4" fill="none" stroke="#444" stroke-width="1.1"/><path d="M877.8 60.8l1.4 1.4M884.6 60.8l-1.4 1.4M877.8 67.6l1.4-1.4M884.6 67.6l-1.4-1.4" stroke="#555" stroke-width="0.8"/>
<path d="M897.6 66.5 V64.3 A2.6 2.6 0 1 1 901.5 66.8" fill="none" stroke="#333" stroke-width="1.3"/><path d="M896.2 62.8 L899.3 62.8 L897.7 65.3Z" fill="#333"/>
<circle cx="914.2" cy="64.5" r="1.9" fill="none" stroke="#aaa" stroke-width="0.7"/><path d="M914.2 61.2v1M914.2 66.8v1M910.9 64.5h1M916.5 64.5h1M911.9 62.2l.7.7M915.8 66.1l.7.7M916.5 62.2l-.7.7M912.6 66.1l-.7.7" stroke="#aaa" stroke-width="0.6"/>
<path d="M930.8 66.5 V64.3 A2.6 2.6 0 1 0 926.9 66.8" fill="none" stroke="#333" stroke-width="1.3"/><path d="M932.2 62.8 L929.1 62.8 L930.7 65.3Z" fill="#333"/>
<path d="M946 67 V63 Q946 61 948 61 Q950 61 950 63 V67" fill="none" stroke="#666" stroke-width="0.9"/><path d="M946.8 64.5h2.4M947 66.5l2 -1" stroke="#666" stroke-width="0.7"/><path d="M949.5 66 l1.5 1.3 l-1.5 0.4z" fill="#555"/>
</svg>
<div style="left:890.5px;top:59px;width:1px;height:10.7px;background:#dcdcdc"></div>
<div style="left:938.6px;top:59px;width:1px;height:10.7px;background:#dcdcdc"></div>
<div style="left:844px;top:71.7px;width:180px;height:73.3px;background:#808080"></div>
<div style="left:895px;top:71.7px;width:2.7px;height:73.3px;background:#8e8a84"></div>
<div style="left:897.6px;top:71.7px;width:72.2px;height:73.3px;background:#e2dbca"></div>
<div style="left:897.6px;top:78.7px;width:72.2px;height:1.7px;background:#f1ece4"></div>
<div style="left:897.6px;top:93.2px;width:72.2px;height:1.7px;background:#f1ece4"></div>
<div style="left:897.6px;top:107.7px;width:72.2px;height:1.7px;background:#f1ece4"></div>
<div style="left:897.6px;top:122.2px;width:72.2px;height:1.7px;background:#f1ece4"></div>
<div style="left:897.6px;top:136.7px;width:72.2px;height:1.7px;background:#f1ece4"></div>
<div style="left:904.1px;top:71.7px;width:1.5px;height:73.3px;background:#464442"></div>
<div style="left:918.9px;top:71.7px;width:1.5px;height:73.3px;background:#464442"></div>
<div style="left:933.1px;top:71.7px;width:1.5px;height:73.3px;background:#464442"></div>
<div style="left:947.9px;top:71.7px;width:1.5px;height:73.3px;background:#464442"></div>
<div style="left:962.1px;top:71.7px;width:1.5px;height:73.3px;background:#464442"></div>
<div style="left:893.7px;top:71.7px;width:1.5px;height:73.3px;background:#d83434"></div>
<div style="left:1012.8px;top:71.7px;width:1.5px;height:73.3px;background:#d83434"></div>
<div style="left:843.5px;top:147.5px;width:180.5px;height:11px;background:#d9d9d9;border-top:1px solid #d2d2d2;box-sizing:border-box"></div>
<div class="t" style="left:845.0px;top:148.10px;line-height:12px;font-size:8.5px;color:#555;opacity:0.8;;transform:scaleX(0.821);transform-origin:0 50%">レイヤー</div>
<svg style="position:absolute;left:1010.5px;top:150.3px;" width="5" height="5" viewBox="0 0 5 5"><path d="M0.3 1.6h3.2v3.2h-3.2z" fill="#3a3a3a"/><path d="M1.5 0.4h3.1v3.1" fill="none" stroke="#3a3a3a" stroke-width="0.9"/></svg>
<svg style="position:absolute;left:1017.7px;top:150.5px;" width="4.5" height="4.5" viewBox="0 0 4.5 4.5"><path d="M0.4 0.4L4.1 4.1M4.1 0.4L0.4 4.1" stroke="#333" stroke-width="1.1"/></svg>
<div class="t" style="left:845.7px;top:161.40px;line-height:12px;font-size:8.5px;color:#444;opacity:0.8;;transform:scaleX(1.014);transform-origin:0 50%">不透明度</div>
<div style="left:891.6px;top:161.6px;width:105.4px;height:9.5px;background:linear-gradient(90deg,#cfe6f8,#82c1f0);border:1px solid #aaa;box-sizing:border-box"></div>
<div class="t" style="left:1000px;top:161.60px;line-height:12px;font-size:7.5px;color:#333;;transform:scaleX(0.810);transform-origin:0 50%">100 %</div>
<div class="t" style="left:845.7px;top:174.10px;line-height:12px;font-size:8.5px;color:#444;opacity:0.8;;transform:scaleX(0.761);transform-origin:0 50%">ブレンド</div>
<div style="left:893px;top:175.4px;width:128.5px;height:8.5px;background:#fff;border-radius:1px;box-shadow:0 0.5px 0 #d8d8d8"></div>
<div class="t" style="left:894.5px;top:174.45px;line-height:12px;font-size:8.5px;color:#333;opacity:0.8;;transform:scaleX(0.943);transform-origin:0 50%">通常</div>
<svg style="position:absolute;left:1015.5px;top:178.15px;" width="5" height="3" viewBox="0 0 5 3"><path d="M0.5 0.5h4l-2 2.5z" fill="#222"/></svg>
<div style="left:846px;top:188.5px;width:8px;height:8px;border:0.8px solid #d4d4d4;background:#f3f3f3;border-radius:1.5px;box-sizing:border-box"></div>
<div class="t" style="left:857px;top:187.40px;line-height:12px;font-size:8.5px;color:#aaa;opacity:0.8;;transform:scaleX(0.986);transform-origin:0 50%">透明度を保護</div>
<div style="left:905.6px;top:188.5px;width:8.2px;height:8.2px;border:0.8px solid #7a7a7a;background:#f8f8f8;border-radius:1.5px;box-sizing:border-box"></div>
<div class="t" style="left:917px;top:187.40px;line-height:12px;font-size:8.5px;color:#444;opacity:0.8;;transform:scaleX(0.705);transform-origin:0 50%">クリッピング</div>
<div style="left:965.8px;top:188.5px;width:8.2px;height:8.2px;border:0.8px solid #7a7a7a;background:#f8f8f8;border-radius:1.5px;box-sizing:border-box"></div>
<div class="t" style="left:977px;top:187.40px;line-height:12px;font-size:8.5px;color:#444;opacity:0.8;;transform:scaleX(0.667);transform-origin:0 50%">ロック</div>
<div style="left:846px;top:200.2px;width:8.2px;height:8.2px;border:0.8px solid #7a7a7a;background:#f8f8f8;border-radius:1.5px;box-sizing:border-box"></div>
<div class="t" style="left:857px;top:199.10px;line-height:12px;font-size:8.5px;color:#444;opacity:0.8;;transform:scaleX(0.830);transform-origin:0 50%">アクティブレイヤーのみ表示</div>
<div style="left:938.5px;top:200.2px;width:8.2px;height:8.2px;border:0.8px solid #7a7a7a;background:#f8f8f8;border-radius:1.5px;box-sizing:border-box"></div>
<div class="t" style="left:949px;top:199.10px;line-height:12px;font-size:8.5px;color:#444;opacity:0.8;;transform:scaleX(1.071);transform-origin:0 50%">参照</div>
<div style="left:844px;top:210.4px;width:167px;height:278.2px;background:#808080;border:1px solid #a0a0a0;box-sizing:border-box"></div>
<svg style="position:absolute;left:1013.5px;top:214px;" width="8" height="6" viewBox="0 0 8 6"><path d="M0.5 5.5h7l-3.5-4.5z" fill="#bbb"/></svg>
<svg style="position:absolute;left:1013px;top:481px;" width="8" height="6" viewBox="0 0 8 6"><path d="M0.5 0.5h7l-3.5 4.5z" fill="#bbb"/></svg>
<div style="left:845px;top:211.0px;width:165px;height:24.1px;background:#fff;border-bottom:1px solid #a8a8a8;box-sizing:border-box"></div>
<div style="left:856px;top:211.0px;width:1px;height:24px;background:#777"></div>
<svg style="position:absolute;left:846.5px;top:219.0px;" width="8" height="8" viewBox="0 0 8 8"><circle cx="4" cy="4" r="2.8" fill="#c9c9c9"/></svg>
<div style="left:857px;top:211.0px;width:153px;height:23.5px;background:#9fd0f6"></div>
<div style="left:861.2px;top:212.0px;width:22px;height:22px;background-color:#fbfbfb;background-image:linear-gradient(45deg,#e6e6e6 25%,transparent 25%,transparent 75%,#e6e6e6 75%),linear-gradient(45deg,#e6e6e6 25%,transparent 25%,transparent 75%,#e6e6e6 75%);background-size:4px 4px;background-position:0 0,2px 2px"></div>
<div style="left:861.2px;top:212.0px;width:22px;height:22px;border:1px solid #c8c8c8;box-sizing:border-box"></div>
<div style="left:863.0px;top:212.0px;width:1px;height:22px;background:repeating-linear-gradient(180deg,#777 0 1px,#bbb 1px 2px)"></div>
<div style="left:867.5px;top:212.0px;width:1px;height:22px;background:repeating-linear-gradient(180deg,#777 0 1px,#bbb 1px 2px)"></div>
<div style="left:872.0px;top:212.0px;width:1px;height:22px;background:repeating-linear-gradient(180deg,#777 0 1px,#bbb 1px 2px)"></div>
<div style="left:876.5px;top:212.0px;width:1px;height:22px;background:repeating-linear-gradient(180deg,#777 0 1px,#bbb 1px 2px)"></div>
<div style="left:881.0px;top:212.0px;width:1px;height:22px;background:repeating-linear-gradient(180deg,#777 0 1px,#bbb 1px 2px)"></div>
<div class="t" style="left:888.5px;top:217.60px;line-height:12px;font-size:8.5px;color:#111;opacity:0.8;font-weight:bold;transform:scaleX(0.924);transform-origin:0 50%">レイヤー5</div>
<div class="t" style="left:985.2px;top:222.20px;line-height:12px;font-size:6px;color:#333;font-weight:bold">8</div>
<div style="left:990.1px;top:225.2px;width:6.7px;height:6.5px;background:#000;border-radius:0.5px"></div>
<svg style="position:absolute;left:997.7px;top:217.2px" width="12.6" height="12.6" viewBox="-6.3 -6.3 12.6 12.6"><g fill="#8a8a8a"><rect x="-1.06" y="-5.30" width="2.12" height="2.65" transform="rotate(0)"/><rect x="-1.06" y="-5.30" width="2.12" height="2.65" transform="rotate(45)"/><rect x="-1.06" y="-5.30" width="2.12" height="2.65" transform="rotate(90)"/><rect x="-1.06" y="-5.30" width="2.12" height="2.65" transform="rotate(135)"/><rect x="-1.06" y="-5.30" width="2.12" height="2.65" transform="rotate(180)"/><rect x="-1.06" y="-5.30" width="2.12" height="2.65" transform="rotate(225)"/><rect x="-1.06" y="-5.30" width="2.12" height="2.65" transform="rotate(270)"/><rect x="-1.06" y="-5.30" width="2.12" height="2.65" transform="rotate(315)"/><circle r="3.71"/></g><circle r="1.27" fill="#9fd0f6"/></svg>
<div style="left:845px;top:235.1px;width:165px;height:24.1px;background:#fff;border-bottom:1px solid #a8a8a8;box-sizing:border-box"></div>
<div style="left:856px;top:235.1px;width:1px;height:24px;background:#777"></div>
<svg style="position:absolute;left:846.5px;top:243.1px;" width="8" height="8" viewBox="0 0 8 8"><circle cx="4" cy="4" r="2.8" fill="#c9c9c9"/></svg>
<div style="left:861.2px;top:236.1px;width:22px;height:22px;background-color:#fbfbfb;background-image:linear-gradient(45deg,#e6e6e6 25%,transparent 25%,transparent 75%,#e6e6e6 75%),linear-gradient(45deg,#e6e6e6 25%,transparent 25%,transparent 75%,#e6e6e6 75%);background-size:4px 4px;background-position:0 0,2px 2px"></div>
<div style="left:861.2px;top:236.1px;width:22px;height:22px;border:1px solid #c8c8c8;box-sizing:border-box"></div>
<div class="t" style="left:888.5px;top:241.70px;line-height:12px;font-size:8.5px;color:#444;opacity:0.8;;transform:scaleX(0.848);transform-origin:0 50%">レイヤー4</div>
<div class="t" style="left:997.8px;top:246.70px;line-height:12px;font-size:6px;color:#333;">8</div>
<div style="left:1002.6px;top:249.79999999999998px;width:6.5px;height:6px;background:#fff;border:1px solid #b0b0b0;box-sizing:border-box"></div>
<div style="left:845px;top:259.2px;width:165px;height:24.1px;background:#fff;border-bottom:1px solid #a8a8a8;box-sizing:border-box"></div>
<div style="left:856px;top:259.2px;width:1px;height:24px;background:#777"></div>
<svg style="position:absolute;left:846.5px;top:267.2px;" width="8" height="8" viewBox="0 0 8 8"><circle cx="4" cy="4" r="2.8" fill="#c9c9c9"/></svg>
<div style="left:861.2px;top:260.2px;width:22px;height:22px;background-color:#fbfbfb;background-image:linear-gradient(45deg,#e6e6e6 25%,transparent 25%,transparent 75%,#e6e6e6 75%),linear-gradient(45deg,#e6e6e6 25%,transparent 25%,transparent 75%,#e6e6e6 75%);background-size:4px 4px;background-position:0 0,2px 2px"></div>
<div style="left:861.2px;top:260.2px;width:22px;height:22px;border:1px solid #c8c8c8;box-sizing:border-box"></div>
<div class="t" style="left:888.5px;top:265.80px;line-height:12px;font-size:8.5px;color:#444;opacity:0.8;;transform:scaleX(0.848);transform-origin:0 50%">レイヤー3</div>
<div class="t" style="left:997.8px;top:270.80px;line-height:12px;font-size:6px;color:#333;">8</div>
<div style="left:1002.6px;top:273.9px;width:6.5px;height:6px;background:#fff;border:1px solid #b0b0b0;box-sizing:border-box"></div>
<div style="left:845px;top:283.3px;width:165px;height:24.1px;background:#fff;border-bottom:1px solid #a8a8a8;box-sizing:border-box"></div>
<div style="left:856px;top:283.3px;width:1px;height:24px;background:#777"></div>
<svg style="position:absolute;left:846.5px;top:291.3px;" width="8" height="8" viewBox="0 0 8 8"><circle cx="4" cy="4" r="2.8" fill="#c9c9c9"/></svg>
<div style="left:861.2px;top:284.3px;width:22px;height:22px;background:#e2dbca;border:1px solid #c8c8c8;box-sizing:border-box"></div>
<div class="t" style="left:888.5px;top:289.90px;line-height:12px;font-size:8.5px;color:#444;opacity:0.8;;transform:scaleX(0.848);transform-origin:0 50%">レイヤー2</div>
<div class="t" style="left:997.8px;top:294.90px;line-height:12px;font-size:6px;color:#333;">8</div>
<div style="left:1002.6px;top:298.0px;width:6.5px;height:6px;background:#e2dbca;border:1px solid #b0b0b0;box-sizing:border-box"></div>
<div style="left:845px;top:307.4px;width:165px;height:24.1px;background:#fff;border-bottom:1px solid #a8a8a8;box-sizing:border-box"></div>
<div style="left:856px;top:307.4px;width:1px;height:24px;background:#777"></div>
<svg style="position:absolute;left:846.5px;top:315.4px;" width="8" height="8" viewBox="0 0 8 8"><circle cx="4" cy="4" r="2.8" fill="#c9c9c9"/></svg>
<div style="left:861.2px;top:308.4px;width:22px;height:22px;background-color:#fbfbfb;background-image:linear-gradient(45deg,#e6e6e6 25%,transparent 25%,transparent 75%,#e6e6e6 75%),linear-gradient(45deg,#e6e6e6 25%,transparent 25%,transparent 75%,#e6e6e6 75%);background-size:4px 4px;background-position:0 0,2px 2px"></div>
<div style="left:861.2px;top:308.4px;width:22px;height:22px;border:1px solid #c8c8c8;box-sizing:border-box"></div>
<div class="t" style="left:888.5px;top:314.00px;line-height:12px;font-size:8.5px;color:#444;opacity:0.8;;transform:scaleX(0.848);transform-origin:0 50%">レイヤー1</div>
<svg style="position:absolute;left:0;top:0" width="1024" height="576" viewBox="0 0 1024 576">
<path d="M850.3 494.3h3l1.5 1.5v4.2h-4.5z" fill="#fff" stroke="#333" stroke-width="0.9"/>
<path d="M864.8 494.3h3l1.5 1.5v4.2h-4.5z" fill="#fff" stroke="#444" stroke-width="0.9"/><path d="M865.8 497h2.5M865.8 498.5h2.5" stroke="#444" stroke-width="0.6"/>
<path d="M879.8 494.3h3l1.5 1.5v4.2h-4.5z" fill="#fff" stroke="#777" stroke-width="0.9"/><path d="M880.8 497.5h2.5" stroke="#777" stroke-width="0.6"/>
<path d="M897 495h2.3l0.8 0.8h3.4v4h-6.5z" fill="#333"/>
<path d="M915.8 494.3h3.2v4.8h-3.2zM917.5 495.5h2.7v4.7h-2.7z" fill="#fff" stroke="#333" stroke-width="0.8"/>
<path d="M933 493.8v4M931.5 496.5l1.5 1.5 1.5-1.5M930.3 499.8h5.4" fill="none" stroke="#999" stroke-width="0.8"/>
<path d="M949.5 494.8h5M950.5 494.8v5.2h3v-5.2M951.2 494h1.6" fill="none" stroke="#333" stroke-width="0.9"/>
</svg>
<div style="left:891.5px;top:491px;width:1px;height:13px;background:#dcdcdc"></div>
<div style="left:909px;top:491px;width:1px;height:13px;background:#dcdcdc"></div>
<div style="left:943px;top:491px;width:1px;height:13px;background:#dcdcdc"></div>
<div style="left:843.5px;top:508.3px;width:180.5px;height:11px;background:#d9d9d9;border-top:1px solid #d2d2d2;box-sizing:border-box"></div>
<div class="t" style="left:845.0px;top:508.90px;line-height:12px;font-size:8.5px;color:#555;opacity:0.8;;transform:scaleX(0.833);transform-origin:0 50%">ブラシサイズ</div>
<svg style="position:absolute;left:1010.5px;top:511.1px;" width="5" height="5" viewBox="0 0 5 5"><path d="M0.3 1.6h3.2v3.2h-3.2z" fill="#3a3a3a"/><path d="M1.5 0.4h3.1v3.1" fill="none" stroke="#3a3a3a" stroke-width="0.9"/></svg>
<svg style="position:absolute;left:1017.7px;top:511.3px;" width="4.5" height="4.5" viewBox="0 0 4.5 4.5"><path d="M0.4 0.4L4.1 4.1M4.1 0.4L0.4 4.1" stroke="#333" stroke-width="1.1"/></svg>
<div style="left:844px;top:519px;width:167px;height:45px;background:#f0f0f0"></div>
<div style="left:844.0px;top:519px;width:23px;height:31.5px;background:#fff"></div>
<div style="left:844.0px;top:551px;width:23px;height:13px;background:#fff"></div>
<svg style="position:absolute;left:844.0px;top:519px;" width="23" height="31" viewBox="0 0 23 31"><circle cx="11.5" cy="14" r="0.3" fill="#222"/></svg>
<div class="t" style="left:850.7px;top:540.20px;line-height:12px;font-size:6px;color:#444;">0.5</div>
<svg style="position:absolute;left:844.0px;top:551px;" width="23" height="13" viewBox="0 0 23 13"><circle cx="11.5" cy="11" r="1.3" fill="#222"/></svg>
<div style="left:867.8px;top:519px;width:23px;height:31.5px;background:#fff"></div>
<div style="left:867.8px;top:551px;width:23px;height:13px;background:#fff"></div>
<svg style="position:absolute;left:867.8px;top:519px;" width="23" height="31" viewBox="0 0 23 31"><circle cx="11.5" cy="14" r="0.4" fill="#222"/></svg>
<div class="t" style="left:874.5px;top:540.20px;line-height:12px;font-size:6px;color:#444;">0.7</div>
<svg style="position:absolute;left:867.8px;top:551px;" width="23" height="13" viewBox="0 0 23 13"><circle cx="11.5" cy="11" r="1.6" fill="#222"/></svg>
<div style="left:891.6px;top:519px;width:23px;height:31.5px;background:#fff"></div>
<div style="left:891.6px;top:551px;width:23px;height:13px;background:#fff"></div>
<svg style="position:absolute;left:891.6px;top:519px;" width="23" height="31" viewBox="0 0 23 31"><circle cx="11.5" cy="14" r="0.5" fill="#222"/></svg>
<div class="t" style="left:901.5px;top:540.20px;line-height:12px;font-size:6px;color:#444;">1</div>
<svg style="position:absolute;left:891.6px;top:551px;" width="23" height="13" viewBox="0 0 23 13"><circle cx="11.5" cy="11" r="2.1" fill="#222"/></svg>
<div style="left:915.4px;top:519px;width:23px;height:31.5px;background:#fff"></div>
<div style="left:915.4px;top:551px;width:23px;height:13px;background:#fff"></div>
<svg style="position:absolute;left:915.4px;top:519px;" width="23" height="31" viewBox="0 0 23 31"><circle cx="11.5" cy="14" r="0.6" fill="#222"/></svg>
<div class="t" style="left:922.1px;top:540.20px;line-height:12px;font-size:6px;color:#444;">1.5</div>
<svg style="position:absolute;left:915.4px;top:551px;" width="23" height="13" viewBox="0 0 23 13"><circle cx="11.5" cy="11" r="2.4" fill="#222"/></svg>
<div style="left:939.2px;top:519px;width:23px;height:31.5px;background:#fff"></div>
<div style="left:939.2px;top:551px;width:23px;height:13px;background:#fff"></div>
<svg style="position:absolute;left:939.2px;top:519px;" width="23" height="31" viewBox="0 0 23 31"><circle cx="11.5" cy="14" r="0.8" fill="#222"/></svg>
<div class="t" style="left:949.1px;top:540.20px;line-height:12px;font-size:6px;color:#444;">2</div>
<svg style="position:absolute;left:939.2px;top:551px;" width="23" height="13" viewBox="0 0 23 13"><circle cx="11.5" cy="11" r="3.0" fill="#222"/></svg>
<div style="left:963.0px;top:519px;width:23px;height:31.5px;background:#fff"></div>
<div style="left:963.0px;top:551px;width:23px;height:13px;background:#fff"></div>
<svg style="position:absolute;left:963.0px;top:519px;" width="23" height="31" viewBox="0 0 23 31"><circle cx="11.5" cy="14" r="1.1" fill="#222"/></svg>
<div class="t" style="left:972.9px;top:540.20px;line-height:12px;font-size:6px;color:#444;">3</div>
<svg style="position:absolute;left:963.0px;top:551px;" width="23" height="13" viewBox="0 0 23 13"><circle cx="11.5" cy="11" r="4.0" fill="#222"/></svg>
<div style="left:986.8px;top:519px;width:23px;height:31.5px;background:#fff"></div>
<div style="left:986.8px;top:551px;width:23px;height:13px;background:#fff"></div>
<svg style="position:absolute;left:986.8px;top:519px;" width="23" height="31" viewBox="0 0 23 31"><circle cx="11.5" cy="14" r="1.5" fill="#222"/></svg>
<div class="t" style="left:996.6999999999999px;top:540.20px;line-height:12px;font-size:6px;color:#444;">4</div>
<svg style="position:absolute;left:986.8px;top:551px;" width="23" height="13" viewBox="0 0 23 13"><circle cx="11.5" cy="11" r="5.25" fill="#222"/></svg>
<div style="left:1016px;top:530px;width:3px;height:10px;background:#8a8a8a;border-radius:1px"></div>
<div style="left:593.3px;top:190px;width:229.2px;height:375px;background:#6e6e6e"></div>
<div style="left:594px;top:186px;width:228px;height:377.3px;border-radius:4px;background:#f0f0f0;overflow:hidden;box-shadow:0 0 0 0.5px #888"><div style="left:0;top:0;width:228px;height:19px;background:#f3f3f3"></div></div>
<svg style="position:absolute;left:598.8px;top:190.3px" width="10.4" height="10.4" viewBox="0 0 20 20"><circle cx="10" cy="11" r="8.6" fill="#1e1e1e"/><path d="M2.6 10 Q3 16 7 19 L6.5 9Z" fill="#e8600c"/><path d="M17.4 10 Q17 16 13 19 L13.5 9Z" fill="#e8600c"/><path d="M6 5 L6.5 1.6 L8.4 3.6 L11.6 3.6 L13.5 1.6 L14 5 L14.2 18.2 Q10 19.4 5.8 18.2Z" fill="#fff"/><path d="M7 8.2 Q8.3 7.4 9.3 8.4 M10.7 8.4 Q11.7 7.4 13 8.2" fill="none" stroke="#666" stroke-width="0.6"/><rect x="8.2" y="12" width="3.6" height="2.2" rx="0.6" fill="#d8561a"/></svg>
<div class="t" style="left:612px;top:190.10px;line-height:12px;font-size:8.5px;color:#222;opacity:0.8;;transform:scaleX(0.943);transform-origin:0 50%">レイヤー属性</div>
<svg style="position:absolute;left:806px;top:190px;" width="11" height="11" viewBox="0 0 11 11"><path d="M1 1L10 10M10 1L1 10" stroke="#333" stroke-width="1"/></svg>
<div style="left:640px;top:212.5px;width:136px;height:135.5px;background-color:#efefef;background-image:linear-gradient(45deg,#e4e4e4 25%,transparent 25%,transparent 75%,#e4e4e4 75%),linear-gradient(45deg,#e4e4e4 25%,transparent 25%,transparent 75%,#e4e4e4 75%);background-size:4px 4px;background-position:0 0,2px 2px"></div>
<div style="left:653px;top:213px;width:2px;height:135px;background:#222"></div>
<div style="left:680px;top:213px;width:2px;height:135px;background:#222"></div>
<div style="left:707px;top:213px;width:2px;height:135px;background:#222"></div>
<div style="left:734px;top:213px;width:2px;height:135px;background:#222"></div>
<div style="left:761px;top:213px;width:2px;height:135px;background:#222"></div>
<div class="t" style="left:600px;top:351.80px;line-height:12px;font-size:8.5px;color:#444;opacity:0.8;;transform:scaleX(1.214);transform-origin:0 50%">名前</div>
<div style="left:674.8px;top:352.4px;width:139.2px;height:9.8px;background:#fff;border-bottom:1px solid #cdcdcd;box-sizing:border-box"></div>
<div class="t" style="left:675.8px;top:352.10px;line-height:12px;font-size:8.5px;color:#333;opacity:0.8;">レイヤー5</div>
<div class="t" style="left:600px;top:364.80px;line-height:12px;font-size:8.5px;color:#444;opacity:0.8;;transform:scaleX(0.881);transform-origin:0 50%">カラー</div>
<div class="t" style="left:686.5px;top:366.80px;line-height:12px;font-size:7.5px;color:#555;">R</div>
<div style="left:697px;top:366.8px;width:27px;height:10px;background:#fff;border-bottom:1px solid #cfcfcf;box-sizing:border-box"></div>
<div class="t" style="left:698px;top:366.80px;line-height:12px;font-size:7.5px;color:#333;">116</div>
<div class="t" style="left:686.5px;top:381.70px;line-height:12px;font-size:7.5px;color:#555;">G</div>
<div style="left:697px;top:381.7px;width:27px;height:10px;background:#fff;border-bottom:1px solid #cfcfcf;box-sizing:border-box"></div>
<div class="t" style="left:698px;top:381.70px;line-height:12px;font-size:7.5px;color:#333;">116</div>
<div class="t" style="left:686.5px;top:396.80px;line-height:12px;font-size:7.5px;color:#555;">B</div>
<div style="left:697px;top:396.8px;width:27px;height:10px;background:#fff;border-bottom:1px solid #2a7fd4;box-sizing:border-box"></div>
<div class="t" style="left:698px;top:396.80px;line-height:12px;font-size:7.5px;color:#333;">116</div>
<div style="left:708.8px;top:397px;width:0.7px;height:9px;background:#000"></div>
<div style="left:729px;top:382px;width:71px;height:68px;background:linear-gradient(to bottom,rgba(0,0,0,0),#000),linear-gradient(to right,#fff,#f01a00)"></div>
<div style="left:801px;top:382px;width:14px;height:68px;background:linear-gradient(to bottom,#ff0050 0%,#ff00ff 17%,#0000ff 33%,#00ffff 50%,#00ff00 67%,#ffff00 83%,#ff3000 100%)"></div>
<svg style="position:absolute;left:724px;top:414px;" width="10" height="10" viewBox="0 0 10 10"><circle cx="5" cy="5" r="3.4" fill="none" stroke="#fff" stroke-width="1.5"/></svg>
<svg style="position:absolute;left:803px;top:441px;" width="10" height="10" viewBox="0 0 10 10"><circle cx="5" cy="5" r="3.4" fill="#e02010" stroke="#fff" stroke-width="1.5"/></svg>
<div class="t" style="left:600.7px;top:469.50px;line-height:12px;font-size:8.5px;color:#444;opacity:0.8;;transform:scaleX(0.955);transform-origin:0 50%">ハーフトーン表示</div>
<div style="left:675px;top:470.7px;width:8.7px;height:8.7px;border:0.8px solid #7a7a7a;background:#f8f8f8;border-radius:1.5px;box-sizing:border-box"></div>
<div class="t" style="left:687.6px;top:469.50px;line-height:12px;font-size:8.5px;color:#333;opacity:0.8;;transform:scaleX(0.983);transform-origin:0 50%">有効にする</div>
<div style="left:675px;top:484.6px;width:139px;height:9.6px;background:#f7f7f7"></div>
<div class="t" style="left:678px;top:484.20px;line-height:12px;font-size:8.5px;color:#bbb;opacity:0.8;;transform:scaleX(1.143);transform-origin:0 50%">円形</div>
<svg style="position:absolute;left:807px;top:488px;" width="6" height="4" viewBox="0 0 6 4"><path d="M0.5 0.5h5l-2.5 2.5z" fill="#ccc"/></svg>
<div class="t" style="left:600.7px;top:498.80px;line-height:12px;font-size:8.5px;color:#444;opacity:0.8;;transform:scaleX(0.955);transform-origin:0 50%">ハーフトーン線数</div>
<div style="left:675px;top:499.3px;width:67px;height:9.2px;background:#f7f7f7"></div>
<div class="t" style="left:677px;top:499.00px;line-height:12px;font-size:7.5px;color:#bbb;;transform:scaleX(1.000);transform-origin:0 50%">60</div>
<svg style="position:absolute;left:732px;top:502px;" width="7" height="5" viewBox="0 0 7 5"><path d="M0.5 0.5l3 3 3-3" fill="none" stroke="#ccc" stroke-width="0.8"/></svg>
<div class="t" style="left:745.5px;top:498.80px;line-height:12px;font-size:8.5px;color:#888;opacity:0.8;;transform:scaleX(1.000);transform-origin:0 50%">線</div>
<div style="left:675px;top:514.2px;width:8.7px;height:8.7px;border:0.8px solid #7a7a7a;background:#f8f8f8;border-radius:1.5px;box-sizing:border-box"></div>
<div class="t" style="left:687.6px;top:513.30px;line-height:12px;font-size:8.5px;color:#333;opacity:0.8;;transform:scaleX(0.967);transform-origin:0 50%">下書きレイヤー</div>
<div style="left:675px;top:528.6px;width:8.5px;height:8.5px;border:0.8px solid #d4d4d4;background:#f3f3f3;border-radius:1.5px;box-sizing:border-box"></div>
<div class="t" style="left:687.6px;top:527.50px;line-height:12px;font-size:8.5px;color:#aaa;opacity:0.8;;transform:scaleX(0.962);transform-origin:0 50%">発光(加算ブレンドのオプション)</div>
<div style="left:710.5px;top:542px;width:49px;height:13.5px;background:#fdfdfd;border:1px solid #5a9fe0;border-radius:2px;box-sizing:border-box"></div>
<div class="t" style="left:729px;top:543.80px;line-height:12px;font-size:7.5px;color:#333;;transform:scaleX(1.068);transform-origin:0 50%">OK</div>
<div style="left:765px;top:542px;width:49px;height:13.5px;background:#fdfdfd;border:1px solid #d8d8d8;border-radius:2px;box-sizing:border-box"></div>
<div class="t" style="left:777.5px;top:543.80px;line-height:12px;font-size:7.5px;color:#333;;transform:scaleX(0.979);transform-origin:0 50%">Cancel</div>
</body></html>
